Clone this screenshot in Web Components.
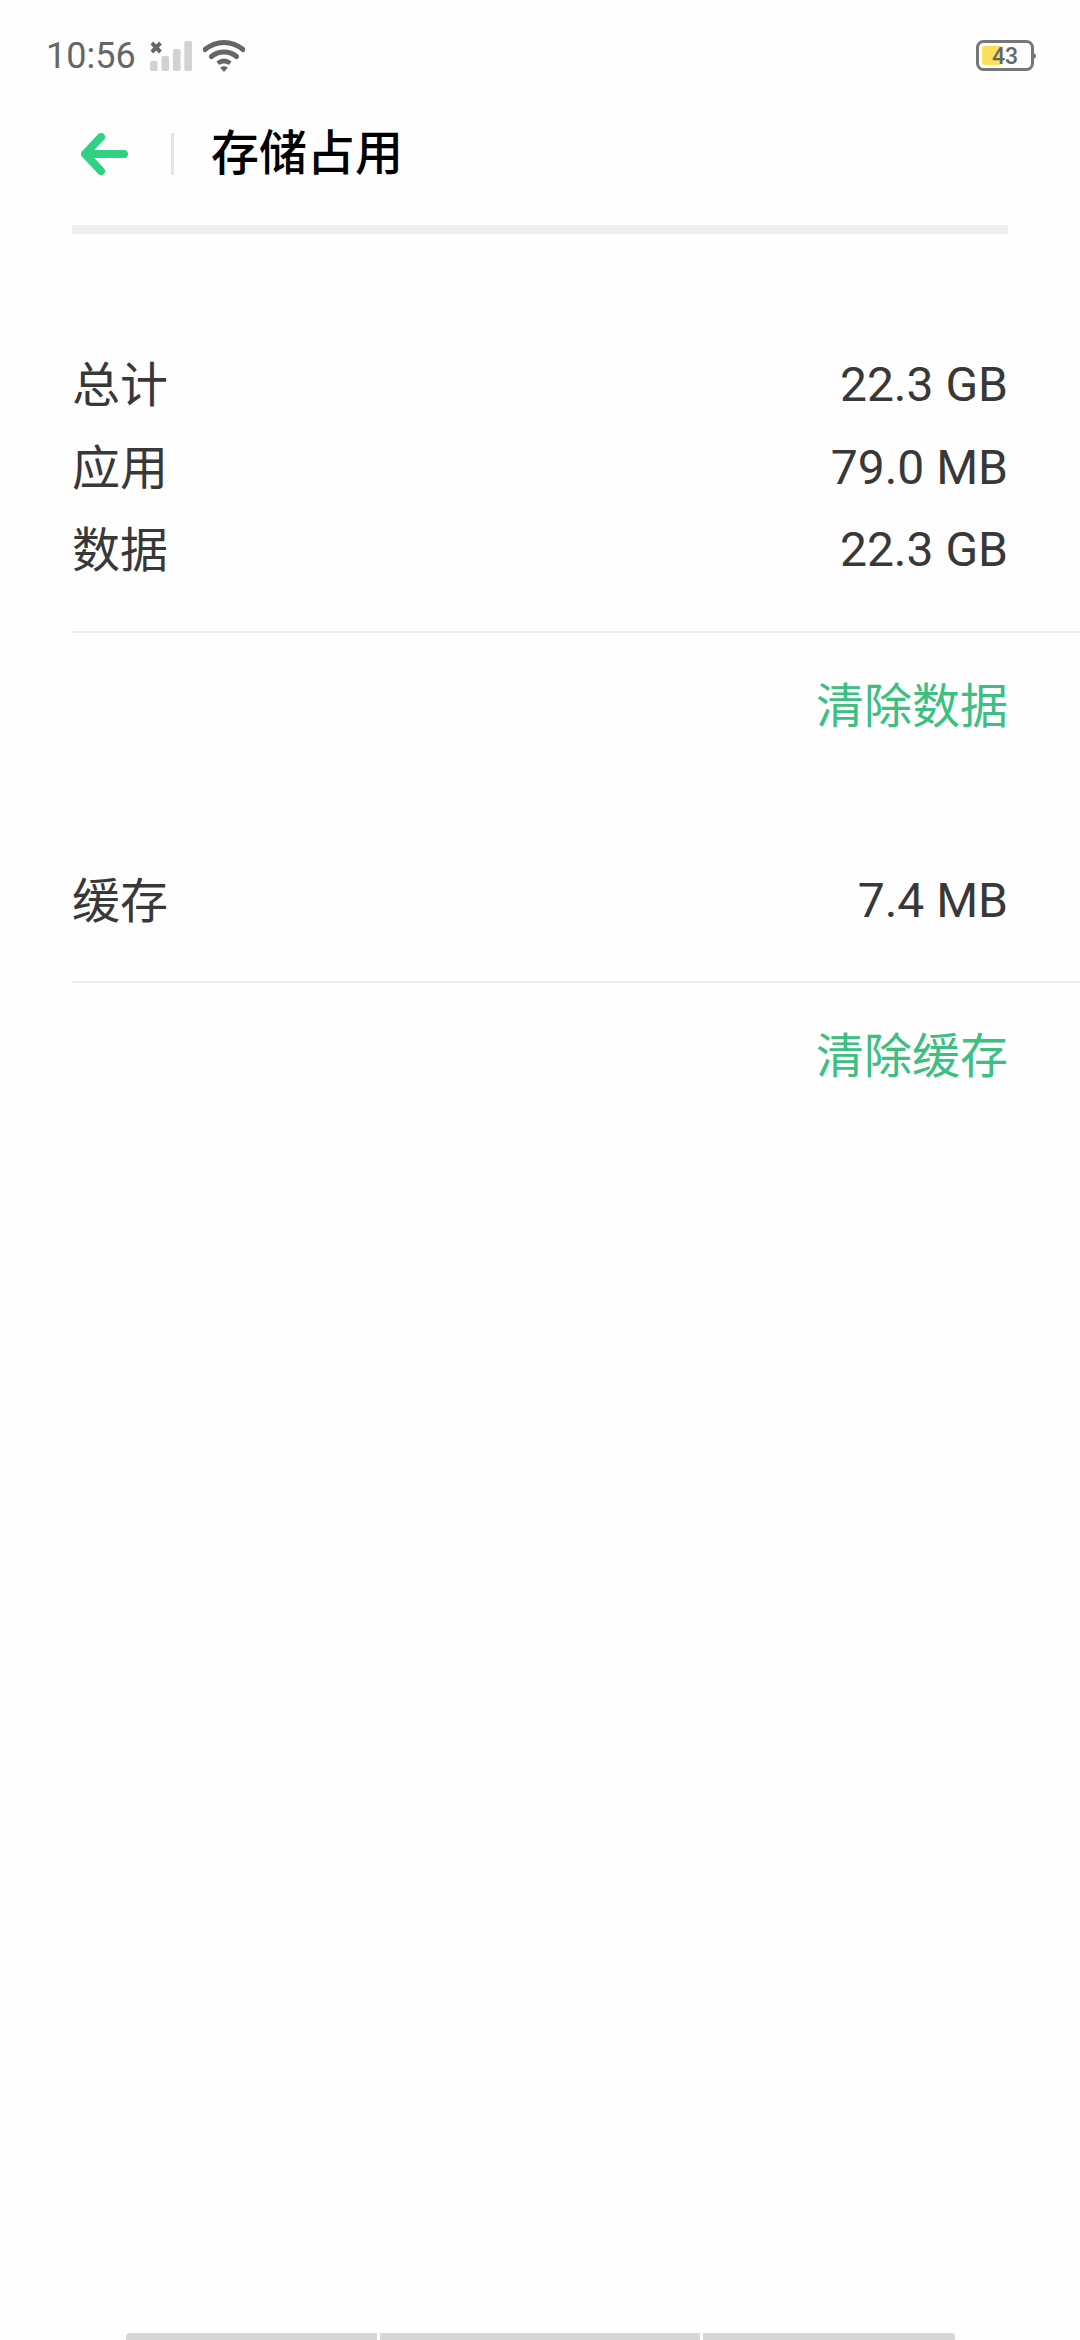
<!DOCTYPE html>
<html lang="zh">
<head>
<meta charset="utf-8">
<title>存储占用</title>
<style>
  html, body { margin: 0; background: #fefefe; }
  body { font-family: Roboto, "Noto Sans CJK SC", sans-serif; }
  storage-page { height: 2340px; }
</style>
</head>
<body>
<storage-page>
  <status-bar time="10:56" level="43"></status-bar>
  <title-bar>存储占用</title-bar>
  <info-group action="清除数据" style="margin-top:106px">
    <info-row label="总计" value="22.3 GB"></info-row>
    <info-row label="应用" value="79.0 MB"></info-row>
    <info-row label="数据" value="22.3 GB"></info-row>
  </info-group>
  <info-group action="清除缓存" style="margin-top:121px">
    <info-row label="缓存" value="7.4 MB"></info-row>
  </info-group>
  <nav-strip></nav-strip>
</storage-page>

<script>
// Page shell: a plain column, the nav strip is pushed to the bottom
class StoragePage extends HTMLElement {
  constructor() {
    super();
    this.attachShadow({ mode: "open" });
    this.shadowRoot.innerHTML = `
      <style>
        :host { display: flex; flex-direction: column; background: #fefefe; overflow: hidden; }
      </style>
      <slot></slot>
    `;
  }
}

class StatusBar extends HTMLElement {
  constructor() {
    super();
    this.attachShadow({ mode: "open" });
  }

  connectedCallback() {
    const time = this.getAttribute("time") || "";
    const level = Number(this.getAttribute("level") || 0);
    this.shadowRoot.innerHTML = `
      <style>
        :host { display: flex; align-items: center; height: 75px; padding: 36px 44px 0 46px; box-sizing: border-box; color: #666; }
        .time { font: 400 36px/36px Roboto, sans-serif; }
        .signal { margin-left: 13px; display: block; }
        .wifi { margin-left: 10px; display: block; }
        .battery { margin-left: auto; display: block; }
        .pct { font: 500 23px Roboto, sans-serif; fill: #666; }
      </style>
      <span class="time">${time}</span>
      <svg class="signal" width="44" height="32" viewBox="0 0 46 32" preserveAspectRatio="none">
        <path d="M3 3l9 9M12 3l-9 9" stroke="#666" stroke-width="4" fill="none"/>
        <rect x="1" y="21" width="8" height="10" rx="2" fill="#d2d2d2"/>
        <rect x="13" y="16" width="8" height="15" rx="2" fill="#d2d2d2"/>
        <rect x="25" y="9" width="8" height="22" rx="2" fill="#d2d2d2"/>
        <rect x="37" y="1" width="8" height="30" rx="2" fill="#d2d2d2"/>
      </svg>
      <svg class="wifi" width="42" height="34" viewBox="0 0 42 34">
        <path d="M2 10.500C13 1 29 1 40 10.500M8.500 17.500C15.500 11.500 26.500 11.500 33.500 17.500" stroke="#666" stroke-width="5" fill="none" stroke-linecap="round"/>
        <path d="M13.500 22.500C18.500 18.500 23.500 18.500 28.500 22.500L26 26C23 24 19 24 16 26Z" fill="#666"/>
        <path d="M17 28.500L21 27L25 28.500L21 33Z" fill="#666"/>
      </svg>
      <svg class="battery" width="60" height="32" viewBox="0 0 60 32">
        <rect x="1.500" y="1.500" width="55" height="28" rx="6" fill="none" stroke="#777" stroke-width="3"/>
        <rect x="6" y="6" width="${level * 0.45}" height="19" rx="2" fill="#fbe05c"/>
        <path d="M57 12l3 3v2l-3 3z" fill="#777"/>
        <text class="pct" x="29" y="24" text-anchor="middle">${level}</text>
      </svg>
    `;
  }
}

class TitleBar extends HTMLElement {
  constructor() {
    super();
    this.attachShadow({ mode: "open" });
    this.shadowRoot.innerHTML = `
      <style>
        :host { display: block; }
        .bar { display: flex; align-items: center; height: 78px; margin-top: 40px; padding-left: 81px; }
        .back { display: block; }
        .sep { width: 3px; height: 42px; background: #e4e4e4; margin-left: 43px; }
        .title { margin-left: 37px; font: 500 48px/78px Roboto, "Noto Sans CJK SC", sans-serif; color: #000; }
        .rule { height: 9px; background: #eeeeee; margin: 32px 72px 0; }
      </style>
      <div class="bar">
        <svg class="back" width="47" height="42" viewBox="0 0 47 42">
          <path d="M20 4L4 21L20 38M4 21H43" fill="none" stroke="#2ed282" stroke-width="8" stroke-linecap="round" stroke-linejoin="round"/>
        </svg>
        <span class="sep"></span>
        <span class="title"><slot></slot></span>
      </div>
      <div class="rule"></div>
    `;
  }
}

class InfoGroup extends HTMLElement {
  constructor() {
    super();
    this.attachShadow({ mode: "open" });
  }

  connectedCallback() {
    const action = this.getAttribute("action") || "";
    this.shadowRoot.innerHTML = `
      <style>
        :host { display: block; padding-left: 72px; }
        .rows { display: flex; flex-direction: column; padding-bottom: 43px; border-bottom: 2px solid #eeeeee; }
        .action { text-align: right; padding: 36px 72px 0 0; font: 400 48px/66px "Noto Sans CJK SC", sans-serif; color: #3cbf80; }
      </style>
      <div class="rows"><slot></slot></div>
      <div class="action">${action}</div>
    `;
  }
}

class InfoRow extends HTMLElement {
  constructor() {
    super();
    this.attachShadow({ mode: "open" });
  }

  connectedCallback() {
    this.shadowRoot.innerHTML = `
      <style>
        :host { display: flex; justify-content: space-between; align-items: center; height: 82.500px; padding-right: 72px; color: #383838; }
        .label { font: 400 48px/66px "Noto Sans CJK SC", sans-serif; }
        .value { font: 400 48px/66px Roboto, sans-serif; margin-top: 8px; }
      </style>
      <span class="label">${this.getAttribute("label") || ""}</span>
      <span class="value">${this.getAttribute("value") || ""}</span>
    `;
  }
}

class NavStrip extends HTMLElement {
  constructor() {
    super();
    this.attachShadow({ mode: "open" });
    this.shadowRoot.innerHTML = `
      <style>
        :host { display: flex; gap: 3px; height: 7px; margin: auto 125px 0 126px; }
        div { background: #d7d7d7; }
        .a { width: 251px; border-radius: 4px 0 0 0; }
        .b { width: 320px; }
        .c { flex: 1; border-radius: 0 4px 0 0; }
      </style>
      <div class="a"></div><div class="b"></div><div class="c"></div>
    `;
  }
}

customElements.define("storage-page", StoragePage);
customElements.define("status-bar", StatusBar);
customElements.define("title-bar", TitleBar);
customElements.define("info-group", InfoGroup);
customElements.define("info-row", InfoRow);
customElements.define("nav-strip", NavStrip);
</script>
</body>
</html>
